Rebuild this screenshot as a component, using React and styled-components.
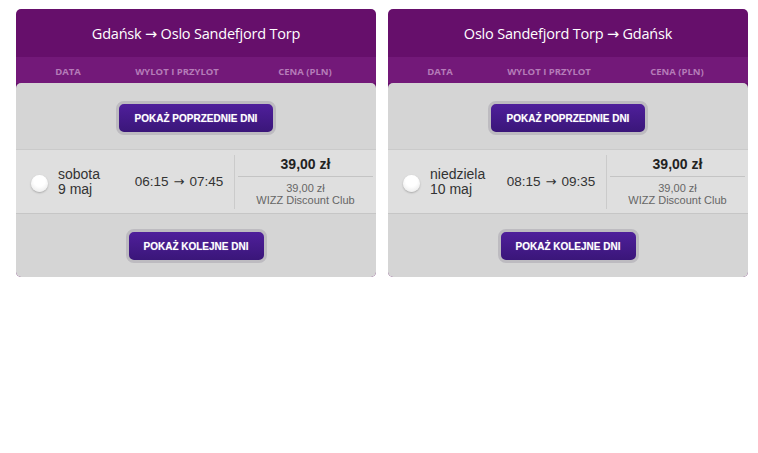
import React from 'react';
import styled, { createGlobalStyle } from 'styled-components';

const Global = createGlobalStyle`
	body {
		margin: 0;
		background: #fff;
		font-family: 'Liberation Sans', Arial, sans-serif;
	}
`;

const Page = styled.div`
	display: flex;
	gap: 12px;
	padding: 9px 0 0 16px;
`;

const Card = styled.section`
	width: 360px;
	background: #660f6b;
	border-radius: 5px;
	overflow: hidden;
`;

const Title = styled.h2`
	margin: 0;
	height: 48px;
	display: flex;
	align-items: center;
	justify-content: center;
	color: #fff;
	font-family: 'Open Sans', 'DejaVu Sans', sans-serif;
	font-weight: 400;
	font-size: 14.5px;
	letter-spacing: -0.2px;
`;

const Heads = styled.div`
	display: grid;
	grid-template-columns: 104px 114px 1fr;
	height: 26px;
	padding-top: 3px;
	box-sizing: border-box;
	background: #731979;
	color: #b57cb8;
	font-family: 'Open Sans', 'DejaVu Sans', sans-serif;
	font-weight: 700;
	font-size: 9.5px;
	align-items: center;
	text-align: center;
`;

const Panel = styled.div`
	background: #d5d5d5;
	border-radius: 5px 5px 0 0;
`;

const ButtonBar = styled.div`
	display: flex;
	justify-content: center;
	padding: ${(p) => p.$pad};
`;

const Button = styled.button`
	width: ${(p) => p.$w}px;
	height: 34px;
	border: 3px solid #bdbbc0;
	border-radius: 8px;
	background: linear-gradient(#4f1f9b, #3a1679);
	color: #fff;
	font-family: 'Liberation Sans', Arial, sans-serif;
	font-weight: 700;
	font-size: 10px;
	text-shadow: 0 0 1px rgba(255, 255, 255, 0.4);
	cursor: pointer;
`;

const Row = styled.div`
	display: grid;
	grid-template-columns: 104px 114px 1fr;
	height: 65px;
	background: #dfdfdf;
	border-top: 1px solid #cacaca;
	border-bottom: 1px solid #c6c6c6;
	box-sizing: border-box;
	color: #333;
	font-size: 14px;
`;

const DateCell = styled.label`
	display: flex;
	align-items: center;
	gap: 10px;
	padding-left: 15px;
	line-height: 15px;
`;

const Radio = styled.span`
	width: 17px;
	height: 17px;
	border-radius: 50%;
	background: radial-gradient(circle at 50% 35%, #ffffff 40%, #e4e4e4 100%);
	box-shadow: 0 1px 2px rgba(0, 0, 0, 0.25);
	flex: none;
	margin-top: 4px;
`;

const Times = styled.div`
	display: flex;
	align-items: center;
	justify-content: center;
	gap: 5px;
	padding-left: 4px;
	font-size: 13.5px;
`;

const Arrow = styled.span`
	font-family: 'DejaVu Sans', sans-serif;
	font-size: 13px;
`;

const PriceCell = styled.div`
	margin: 5px 0 4px;
	border-left: 1px solid #cbcbcb;
	padding: 0 3px;
	text-align: center;
`;

const Price = styled.div`
	height: 21px;
	border-bottom: 1px solid #c4c4c4;
	font-weight: 700;
	font-size: 14px;
	line-height: 19px;
	color: #222;
`;

const Club = styled.div`
	padding-top: 5px;
	font-size: 11px;
	line-height: 12px;
	color: #666;
`;

const flights = [
	{ from: 'Gdańsk', to: 'Oslo Sandefjord Torp', day: 'sobota', date: '9 maj', dep: '06:15', arr: '07:45' },
	{ from: 'Oslo Sandefjord Torp', to: 'Gdańsk', day: 'niedziela', date: '10 maj', dep: '08:15', arr: '09:35' }
];

const Flight = ({ f }) => (
	<Card>
		<Title>{f.from} → {f.to}</Title>
		<Heads>
			<span>DATA</span>
			<span>WYLOT I PRZYLOT</span>
			<span>CENA (PLN)</span>
		</Heads>
		<Panel>
			<ButtonBar $pad="18px 0 14px">
				<Button $w={160}>POKAŻ POPRZEDNIE DNI</Button>
			</ButtonBar>
			<Row>
				<DateCell>
					<Radio />
					<span>{f.day}<br />{f.date}</span>
				</DateCell>
				<Times>
					<span>{f.dep}</span>
					<Arrow>→</Arrow>
					<span>{f.arr}</span>
				</Times>
				<PriceCell>
					<Price>39,00 zł</Price>
					<Club>39,00 zł<br />WIZZ Discount Club</Club>
				</PriceCell>
			</Row>
			<ButtonBar $pad="15px 0 14px">
				<Button $w={141}>POKAŻ KOLEJNE DNI</Button>
			</ButtonBar>
		</Panel>
	</Card>
);

const App = () => (
	<>
		<Global />
		<Page>
			{flights.map((f) => <Flight key={f.day} f={f} />)}
		</Page>
	</>
);

export default App;
